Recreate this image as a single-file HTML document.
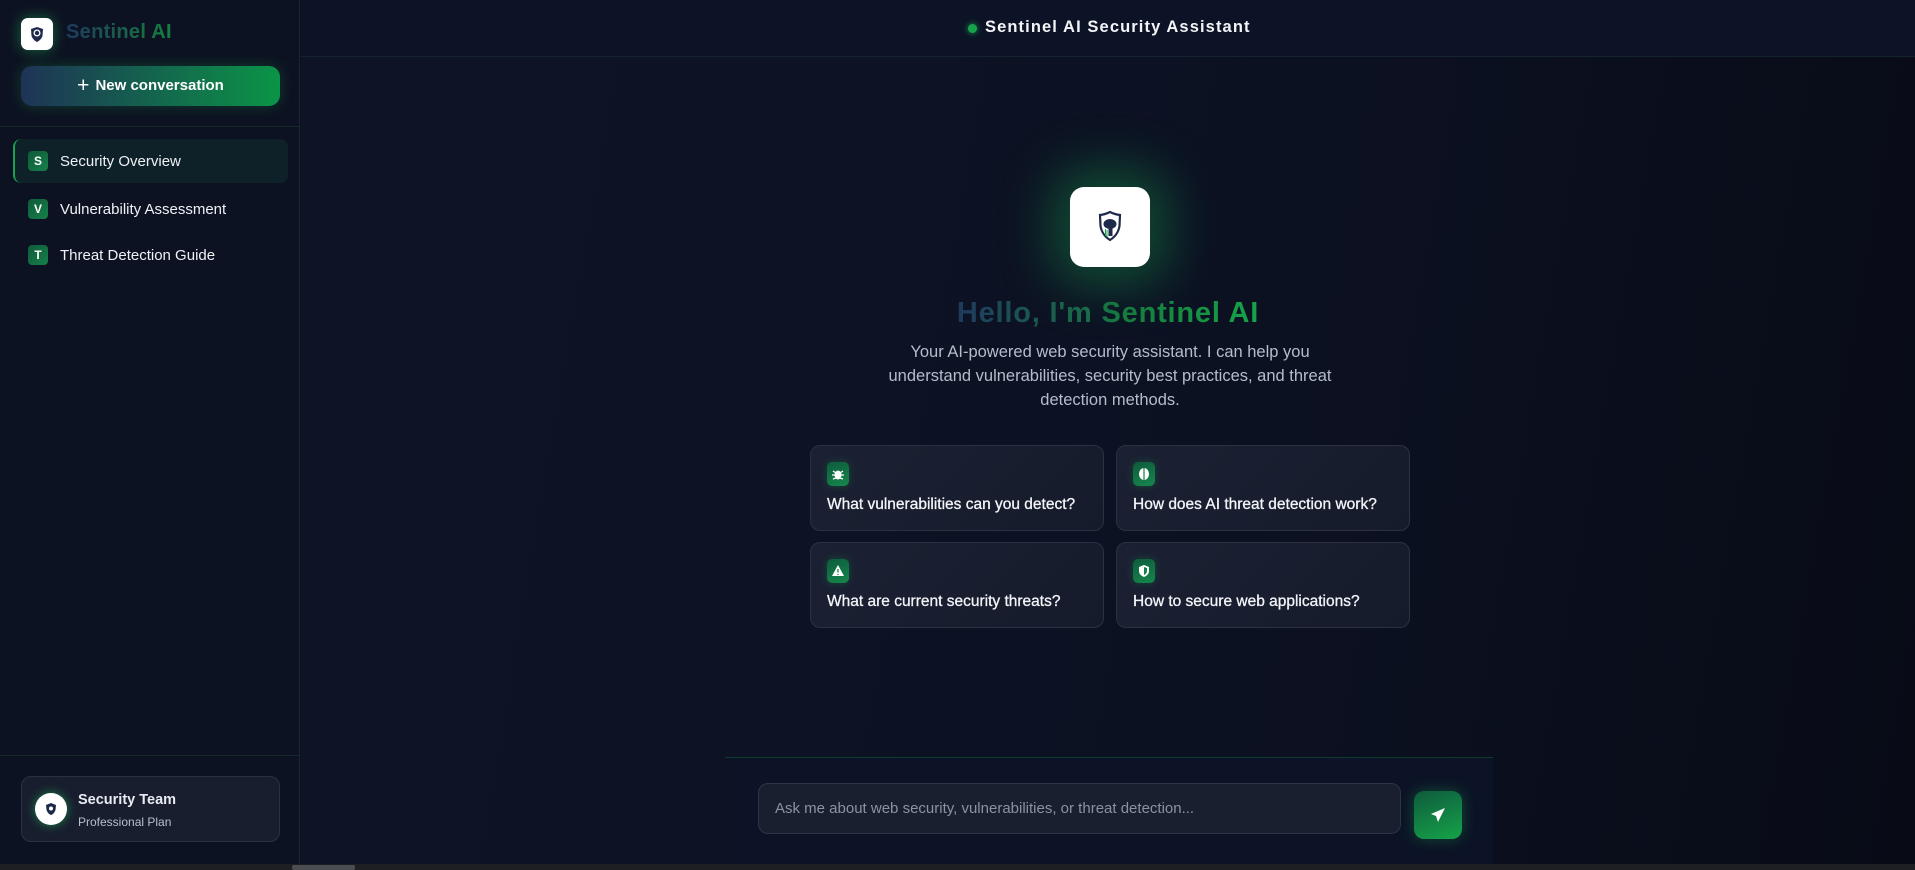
<!DOCTYPE html>
<html><head><meta charset="utf-8"><style>
*{box-sizing:border-box;margin:0;padding:0}
body{width:1915px;height:870px;overflow:hidden;background:#0c1120;font-family:"Liberation Sans",sans-serif;color:#e8ebf2;position:relative}
.sb{position:absolute;left:0;top:0;width:300px;height:864px;background:#0d1222;border-right:1px solid #1a2436}
.main{position:absolute;left:301px;top:0;width:1614px;height:864px;background:linear-gradient(100deg,#0e1426 0%,#0c1122 60%,#080b16 100%)}
.hdr{position:absolute;left:301px;top:0;width:1614px;height:57px;border-bottom:1px solid #152230;background:#0d1326}
.logo{position:absolute;left:21px;top:18px;width:32px;height:32px;background:#fff;border-radius:7px;box-shadow:0 0 14px rgba(34,197,94,.5)}
.brand{position:absolute;left:66px;top:21px;font-size:20px;font-weight:bold;letter-spacing:0.3px;background:linear-gradient(90deg,#1e3a5f,#15803d);-webkit-background-clip:text;color:transparent}
.newc{position:absolute;left:21px;top:66px;width:259px;height:40px;border-radius:11px;background:linear-gradient(90deg,#1e3356,#0b9447);box-shadow:0 0 14px rgba(22,163,74,.3);font-size:15px;font-weight:bold;color:#fff;text-align:center;line-height:40px}
.div1{position:absolute;left:0;top:126px;width:300px;height:1px;background:#142a2a}
.item{position:absolute;left:13px;width:275px;height:44px;font-size:15px;color:#eef1f6}
.item.act{background:#0f2128;border-left:2px solid #16a34a;border-radius:8px}
.item .b{position:absolute;left:15px;top:12px;width:20px;height:20px;border-radius:4px;background:linear-gradient(135deg,#0f5a3a,#16804a);font-size:12px;font-weight:bold;text-align:center;line-height:20px;color:#fff}
.item.act .b{left:13px}
.item span.t{position:absolute;left:47px;top:14px}
.item.act span.t{left:45px}
.div2{position:absolute;left:0;top:755px;width:300px;height:1px;background:#142a2a}
.user{position:absolute;left:21px;top:776px;width:259px;height:66px;border:1px solid #2a3142;border-radius:10px;background:#181e2e}
.av{position:absolute;left:13px;top:16px;width:32px;height:32px;border-radius:50%;background:#fff;box-shadow:0 0 10px rgba(34,197,94,.6)}
.ut{position:absolute;left:56px;top:15px;font-size:14.5px;font-weight:bold}
.us{position:absolute;left:56px;top:38px;font-size:12px;color:#b8bfcc}
.ttl{position:absolute;left:985px;top:18px;font-size:16.5px;font-weight:bold;letter-spacing:1.1px;color:#f2f4f8}
.dot{position:absolute;left:968px;top:24px;width:9px;height:9px;border-radius:50%;background:#16a34a;box-shadow:0 0 6px #16a34a}
.hero{position:absolute;left:1070px;top:187px;width:80px;height:80px;border-radius:14px;background:#fff;box-shadow:0 0 50px 18px rgba(22,163,74,.4)}
.h1{position:absolute;left:301px;width:1614px;top:297px;text-align:center;font-size:29px;font-weight:bold;letter-spacing:0.8px}
.h1 span{background:linear-gradient(90deg,#1e3a5f,#15803d 60%,#16a34a);-webkit-background-clip:text;color:transparent}
.p{position:absolute;left:875px;width:470px;top:340px;text-align:center;font-size:16.5px;line-height:24px;color:#b5bccb}
.card{position:absolute;width:294px;height:86px;border:1px solid #2a3142;border-radius:10px;background:linear-gradient(135deg,#1b2133,#161b2b)}
.card .ic{position:absolute;left:16px;top:16px;width:22px;height:24px;border-radius:5px;background:linear-gradient(160deg,#0e5b3c,#16874c);box-shadow:0 0 8px rgba(22,163,74,.3)}
.card .tx{position:absolute;left:16px;top:50px;font-size:15.5px;color:#f2f4f8;-webkit-text-stroke:0.3px #f2f4f8}
.inp-area{position:absolute;left:725px;top:757px;width:768px;height:107px;background:#0c1326;border-top:1px solid #113a2e}
.inp{position:absolute;left:758px;top:783px;width:643px;height:51px;border:1px solid #2e3547;border-radius:10px;background:#1a1f2f;font-size:15px;color:#8a92a3;padding:16px 0 0 16px}
.send{position:absolute;left:1414px;top:791px;width:48px;height:48px;border-radius:10px;background:linear-gradient(160deg,#0e5b3c,#16a34a);box-shadow:0 0 14px rgba(22,163,74,.4)}
.bot{position:absolute;left:0;top:864px;width:1915px;height:6px;background:#1d1f22}
.thumb{position:absolute;left:292px;top:865px;width:63px;height:5px;background:#4a4d52;border-radius:2px}
</style></head><body>
<div class="main"></div>
<div class="hdr"></div>
<div class="sb">
<div class="logo"><svg width="32" height="32" viewBox="0 0 32 32"><path d="M16 9 L22 11 L21.5 18 Q20 22 16 24 Q12 22 10.5 18 L10 11 Z" fill="#1e2a4a"/><circle cx="16" cy="15" r="3.5" fill="#fff"/><circle cx="16" cy="15" r="2.2" fill="#1e2a4a"/></svg></div>
<div class="brand">Sentinel AI</div>
<div class="newc"><span style="font-size:21px;font-weight:normal;vertical-align:-2px;margin-right:6px">+</span>New conversation</div>
<div class="div1"></div>
<div class="item act" style="top:139px"><div class="b">S</div><span class="t">Security Overview</span></div>
<div class="item" style="top:187px"><div class="b">V</div><span class="t">Vulnerability Assessment</span></div>
<div class="item" style="top:233px"><div class="b">T</div><span class="t">Threat Detection Guide</span></div>
<div class="div2"></div>
<div class="user"><div class="av"><svg width="32" height="32" viewBox="0 0 32 32"><path d="M16 10 L21 12 L20.5 17 Q19 21 16 22 Q13 21 11.5 17 L11 12 Z" fill="#1e2a4a"/><circle cx="16" cy="15.5" r="2" fill="#fff"/></svg></div><div class="ut">Security Team</div><div class="us">Professional Plan</div></div>
</div>
<div class="dot"></div><div class="ttl">Sentinel AI Security Assistant</div>
<div class="hero"><svg width="80" height="80" viewBox="0 0 80 80"><path d="M40 25 Q45 27.5 50 28 L49.5 39 Q48 48 40 53 Q32 48 30.5 39 L30 28 Q35 27.5 40 25 Z" fill="#fff" stroke="#1e2a4a" stroke-width="2.2"/><ellipse cx="40" cy="37" rx="6.5" ry="5" fill="#1e2a4a"/><rect x="38.5" y="40" width="4" height="9" fill="#1e2a4a"/><path d="M35.5 42 V49 M37 43 V50" stroke="#16a34a" stroke-width="1"/></svg></div>
<div class="h1"><span>Hello, I'm Sentinel AI</span></div>
<div class="p">Your AI-powered web security assistant. I can help you understand vulnerabilities, security best practices, and threat detection methods.</div>
<div class="card" style="left:810px;top:445px"><div class="ic"><svg width="22" height="24" viewBox="0 0 22 24"><ellipse cx="11" cy="13" rx="3.5" ry="4.5" fill="#fff"/><path d="M6 9l3 2M16 9l-3 2M5 13h3M14 13h3M6 17l3-1M16 17l-3-1" stroke="#fff" stroke-width="1.3"/></svg></div><div class="tx">What vulnerabilities can you detect?</div></div>
<div class="card" style="left:1116px;top:445px"><div class="ic"><svg width="22" height="24" viewBox="0 0 22 24"><ellipse cx="11" cy="12" rx="5" ry="6" fill="#fff"/><path d="M11 6v12" stroke="#16804a" stroke-width="1.2"/></svg></div><div class="tx">How does AI threat detection work?</div></div>
<div class="card" style="left:810px;top:542px"><div class="ic"><svg width="22" height="24" viewBox="0 0 22 24"><path d="M11 6 L17 17 H5 Z" fill="#fff"/><path d="M11 10v3.5M11 15v1" stroke="#16804a" stroke-width="1.3"/></svg></div><div class="tx">What are current security threats?</div></div>
<div class="card" style="left:1116px;top:542px"><div class="ic"><svg width="22" height="24" viewBox="0 0 22 24"><path d="M11 6 L16 8 V12 Q16 16 11 18 Q6 16 6 12 V8 Z" fill="#fff"/><path d="M11 8 V16 Q14 14.5 14 12 V9 Z" fill="#16804a"/></svg></div><div class="tx">How to secure web applications?</div></div>
<div class="inp-area"></div>
<div class="inp">Ask me about web security, vulnerabilities, or threat detection...</div>
<div class="send"><svg width="48" height="48" viewBox="0 0 48 48"><path d="M31 17 L17 23 L22 25 L24 31 Z" fill="#fff"/></svg></div>
<div class="bot"></div><div class="thumb"></div>
</body></html>
